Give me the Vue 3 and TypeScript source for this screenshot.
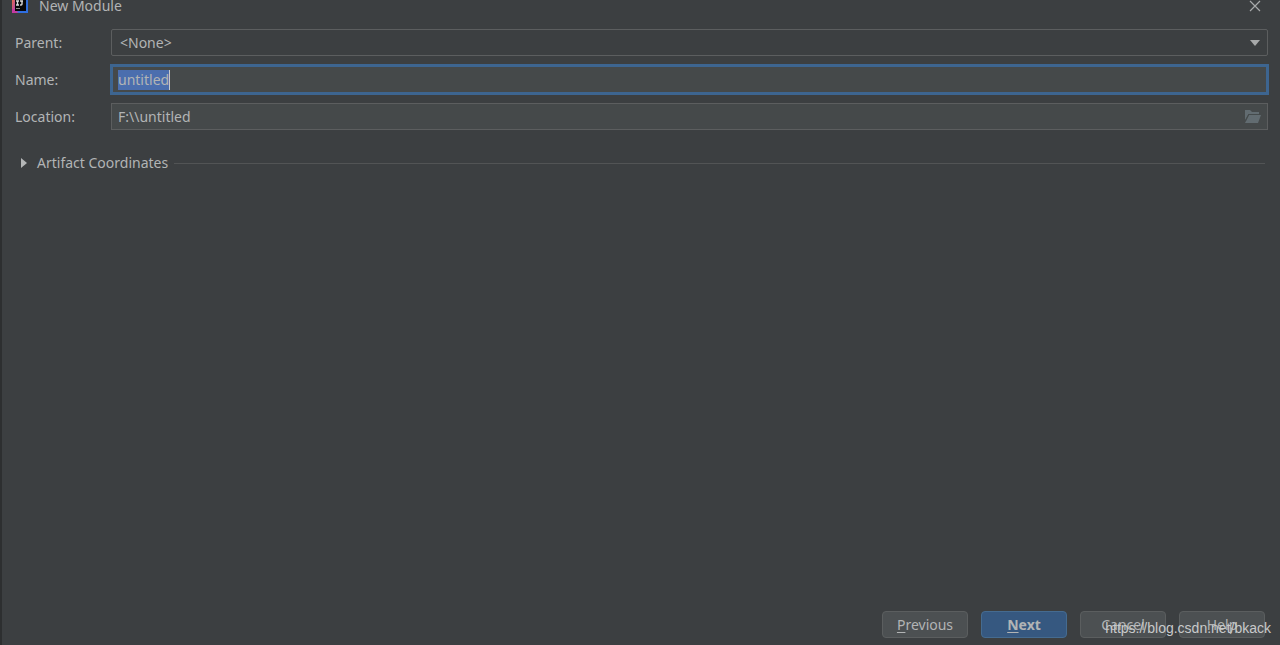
<script setup lang="ts">
import { onMounted, ref } from 'vue'

const parent = ref('<None>')
const name = ref('untitled')
const location = ref('F:\\\\untitled')
const nameInput = ref<HTMLInputElement | null>(null)

onMounted(() => {
  nameInput.value?.focus()
  nameInput.value?.select()
})
</script>

<template>
  <main class="dialog">
    <header class="titlebar">
      <svg class="logo" viewBox="0 0 16 16" aria-hidden="true">
        <defs>
          <linearGradient id="edge" x1="0" y1="0" x2="1" y2="0.3">
            <stop offset="0" stop-color="#f0703c" />
            <stop offset="0.35" stop-color="#b84aa0" />
            <stop offset="0.7" stop-color="#2f6fe0" />
          </linearGradient>
        </defs>
        <rect width="16" height="16" fill="url(#edge)" />
        <path d="M0 12h3l3 4H0z" fill="#c53aa0" />
        <rect x="3" y="2" width="11" height="12" fill="#08080a" />
        <path d="M4 4h3M5.5 4v4M4 8h3M8 4h3M10 4v3.2Q10 8 8 8" fill="none" stroke="#dcdcdc" stroke-width="1.4" />
        <rect x="4" y="11" width="4" height="1" fill="#8a8a8a" />
      </svg>
      <h1 class="title">New Module</h1>
      <button class="close" type="button" aria-label="Close">
        <svg viewBox="0 0 12 12" aria-hidden="true"><path d="M1 1l10 10M11 1L1 11" fill="none" stroke="#a8aaab" stroke-width="1.2" /></svg>
      </button>
    </header>

    <form class="form" @submit.prevent>
      <label for="parent">Parent:</label>
      <div class="field combo">
        <select id="parent" v-model="parent">
          <option value="<None>">&lt;None&gt;</option>
        </select>
        <svg class="arrow" viewBox="0 0 10 6" aria-hidden="true"><path d="M0 0h10L5 6z" fill="#a7a9aa" /></svg>
      </div>

      <label for="name">Name:</label>
      <div class="field text focused">
        <input id="name" ref="nameInput" v-model="name" class="selected" type="text" spellcheck="false" />
      </div>

      <label for="location">Location:</label>
      <div class="field text">
        <input id="location" v-model="location" class="path" type="text" spellcheck="false" />
        <button class="browse" type="button" aria-label="Browse">
          <svg viewBox="0 0 16 13" aria-hidden="true">
            <path d="M0 0h5l2 2h7v2H3.5L0 10z" fill="#626c71" />
            <path d="M4 5h12l-3 8H0z" fill="#626c71" />
            <path d="M0.5 11L3.7 4.5H14" fill="none" stroke="#454b4d" stroke-width="0.8" />
          </svg>
        </button>
      </div>
    </form>

    <button class="section" type="button" aria-expanded="false">
      <svg viewBox="0 0 6 10" aria-hidden="true"><path d="M0 0l6 5-6 5z" fill="#b4b6b7" /></svg>
      <span>Artifact Coordinates</span>
      <span class="rule"></span>
    </button>

    <footer class="actions">
      <button type="button"><u>P</u>revious</button>
      <button type="button" class="primary"><u>N</u>ext</button>
      <button type="button">Cancel</button>
      <button type="button">Help</button>
      <span class="watermark">https://blog.csdn.net/bkack</span>
    </footer>
  </main>
</template>

<style>
body {
  background: #3c3f41;
}
</style>

<style scoped>
.dialog,
.dialog * {
  box-sizing: border-box;
}
.dialog {
  display: flex;
  flex-direction: column;
  min-height: 100vh;
  padding: 0 12px 7px 13px;
  border-left: 2px solid #2d2f30;
  background: #3c3f41;
  color: #b2b4b5;
  font: 14px/20px "Noto Sans", "Open Sans", sans-serif;
}
button,
input,
select {
  margin: 0;
  padding: 0;
  border: 0;
  outline: 0;
  background: none;
  color: inherit;
  font: inherit;
}
svg {
  display: block;
}
.titlebar {
  display: flex;
  align-items: center;
  height: 12px;
  margin: 0 7px 0 -3px;
}
.logo {
  width: 16px;
  height: 16px;
  margin-bottom: 2px;
}
.title {
  flex: 1;
  margin: 0 0 0 11px;
  font: inherit;
}
.close svg {
  width: 12px;
  height: 12px;
}
.form {
  display: grid;
  grid-template-columns: 96px 1fr;
  align-items: center;
  row-gap: 9px;
  margin-top: 17px;
}
.field {
  display: flex;
  align-items: center;
  height: 27px;
  border: 1px solid #5c5e5f;
}
.combo {
  position: relative;
  border-radius: 2px;
}
.combo select {
  flex: 1;
  height: 25px;
  padding: 0 24px 0 8px;
  appearance: none;
}
.arrow {
  position: absolute;
  right: 7px;
  width: 10px;
  height: 6px;
  pointer-events: none;
}
.text {
  padding: 0 6px;
  background: #45494a;
}
.focused {
  height: 29px;
  border-color: #3d6590;
  box-shadow: 0 0 0 1px #3d6590, inset 0 0 0 1px #3d6590;
}
.selected {
  height: 20px;
  field-sizing: content;
  border-right: 1px solid #c8cacb;
}
.selected::selection {
  background: rgba(75, 110, 175, 0.99);
  color: #b2b4b5;
}
.path {
  flex: 1;
  min-width: 0;
}
.browse svg {
  width: 16px;
  height: 13px;
}
.section {
  display: flex;
  align-items: center;
  margin: 23px 3px 0 6px;
  text-align: left;
}
.section svg {
  width: 6px;
  height: 10px;
  margin-right: 10px;
}
.rule {
  flex: 1;
  height: 1px;
  margin-left: 6px;
  background: #525455;
}
.actions {
  position: relative;
  display: flex;
  justify-content: flex-end;
  gap: 13px;
  margin-top: auto;
  padding-right: 3px;
}
.actions button {
  width: 86px;
  height: 27px;
  border: 1px solid #5b5e5f;
  border-radius: 4px;
  background: #4c5052;
}
.actions .primary {
  border-color: #456b90;
  background: #365880;
  font-weight: 700;
}
u {
  text-underline-offset: 2px;
}
.watermark {
  position: absolute;
  right: -3px;
  bottom: 0;
  color: #c8c9ca;
  font: 14px/20px "Liberation Sans", Arial, sans-serif;
  pointer-events: none;
}
</style>
